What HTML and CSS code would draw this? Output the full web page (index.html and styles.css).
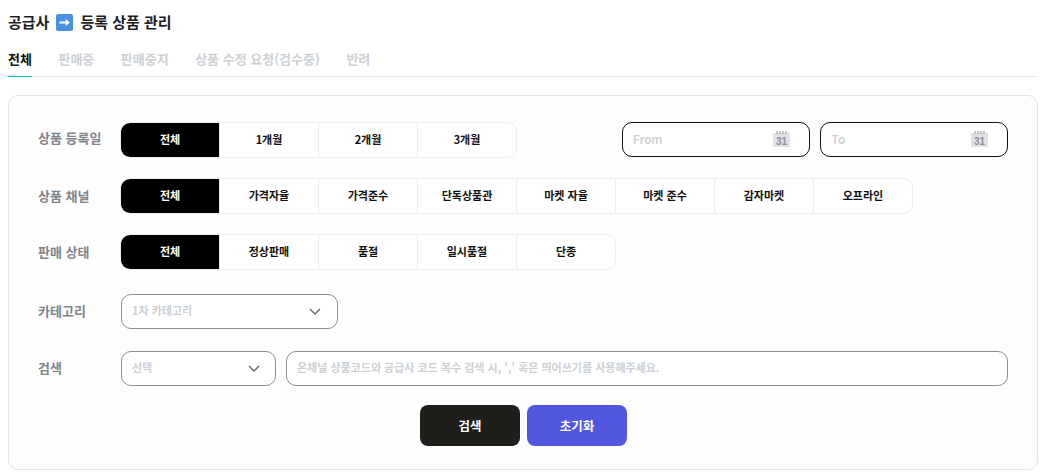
FILE: index.html
```html
<!DOCTYPE html>
<html lang="ko">
<head>
<meta charset="utf-8">
<title>등록 상품 관리</title>
<link rel="stylesheet" href="styles.css">
</head>
<body>
<h1 class="title"><span>공급사</span>
  <svg class="emoji" viewBox="0 0 17 17" width="17" height="17"><rect width="17" height="17" rx="2" fill="#4a90e2"/><path d="M3.500 7.400h6.300V5l4 3.500-4 3.500V9.600H3.500z" fill="#fff"/></svg>
  <span>등록 상품 관리</span></h1>
<nav class="tabs">
  <a class="tab active">전체</a>
  <a class="tab">판매중</a>
  <a class="tab">판매중지</a>
  <a class="tab">상품 수정 요청(검수중)</a>
  <a class="tab">반려</a>
</nav>
<section class="card">
  <div class="row row-first">
    <div class="label">상품 등록일</div>
    <div class="seg">
      <div class="cell on">전체</div><div class="cell">1개월</div><div class="cell">2개월</div><div class="cell">3개월</div>
    </div>
    <div class="dates">
      <div class="field date"><span class="ph ph-date">From</span>
        <svg class="cal" viewBox="0 0 17 16" width="17" height="16"><rect y="2" width="17" height="14" fill="#dfe1e4"/><path d="M4 0v3M7 0v3M10 0v3M13 0v3" stroke="#8d9095" stroke-width="1"/><text x="8.500" y="13.500" class="cal-num">31</text></svg>
      </div>
      <div class="field date"><span class="ph ph-date">To</span>
        <svg class="cal" viewBox="0 0 17 16" width="17" height="16"><rect y="2" width="17" height="14" fill="#dfe1e4"/><path d="M4 0v3M7 0v3M10 0v3M13 0v3" stroke="#8d9095" stroke-width="1"/><text x="8.500" y="13.500" class="cal-num">31</text></svg>
      </div>
    </div>
  </div>
  <div class="row">
    <div class="label">상품 채널</div>
    <div class="seg">
      <div class="cell on">전체</div><div class="cell">가격자율</div><div class="cell">가격준수</div><div class="cell">단독상품관</div><div class="cell">마켓 자율</div><div class="cell">마켓 준수</div><div class="cell">감자마켓</div><div class="cell">오프라인</div>
    </div>
  </div>
  <div class="row">
    <div class="label">판매 상태</div>
    <div class="seg">
      <div class="cell on">전체</div><div class="cell">정상판매</div><div class="cell">품절</div><div class="cell">일시품절</div><div class="cell">단종</div>
    </div>
  </div>
  <div class="row row-category">
    <div class="label">카테고리</div>
    <div class="field select wide"><span class="ph">1차 카테고리</span>
      <svg class="chev" viewBox="0 0 12 7" width="12" height="7"><path d="M1 1l5 5 5-5" fill="none" stroke="#5f6770" stroke-width="1.300"/></svg>
    </div>
  </div>
  <div class="row row-search">
    <div class="label">검색</div>
    <div class="field select narrow"><span class="ph">선택</span>
      <svg class="chev" viewBox="0 0 12 7" width="12" height="7"><path d="M1 1l5 5 5-5" fill="none" stroke="#5f6770" stroke-width="1.300"/></svg>
    </div>
    <div class="field select grow"><span class="ph">온채널 상품코드와 공급사 코드 복수 검색 시, ',' 혹은 띄어쓰기를 사용해주세요.</span></div>
  </div>
  <div class="actions">
    <button class="btn dark">검색</button>
    <button class="btn blue">초기화</button>
  </div>
</section>
</body>
</html>
```
FILE: styles.css
```css
* { box-sizing: border-box; }
html, body { height: 100%; }
body {
  margin: 0;
  padding: 0 7px 0 8px;
  background: #fff;
  color: #1d1d1f;
  font-family: "Noto Sans CJK KR", "Noto Sans", sans-serif;
  overflow: hidden;
}
.title {
  margin: 0;
  padding-top: 11px;
  height: 33px;
  font-size: 15px;
  line-height: 22px;
  font-weight: 700;
  display: flex;
  align-items: center;
  gap: 7px;
}
.emoji { flex: none; }
.tabs {
  margin-top: 11px;
  display: flex;
  gap: 26.500px;
  height: 33px;
  border-bottom: 1px solid #e8e8e8;
}
.tab {
  height: 33px;
  padding-top: 5px;
  font-size: 13px;
  line-height: 19px;
  font-weight: 700;
  color: #cdd0d4;
}
.tab.active {
  color: #111;
  border-bottom: 1px solid #00bfa8;
}
.card {
  margin-top: 18px;
  height: 375px;
  padding: 26px 29px 0 29px;
  background: #fdfdfd;
  border: 1px solid #e4e4e4;
  border-radius: 10px;
}
.row {
  display: flex;
  align-items: flex-start;
  height: 36px;
  margin-bottom: 20px;
}
.row-category { margin-top: 24px; margin-bottom: 21px; }
.row-search { margin-bottom: 18px; }
.label {
  width: 83px;
  flex: none;
  font-size: 13px;
  line-height: 36px;
  font-weight: 700;
  color: #80858b;
}
.row-first .label { line-height: 32px; }
.row-category .label, .row-search .label { line-height: 34px; }
.seg {
  flex: none;
  display: flex;
  height: 36px;
  margin-left: -1px;
  background: #fff;
  border: 1px solid #ececec;
  border-radius: 10px;
  overflow: hidden;
}
.cell {
  width: 99px;
  flex: none;
  text-align: center;
  font-size: 11px;
  line-height: 33px;
  font-weight: 700;
  color: #111;
  border-left: 1px solid #ececec;
}
.cell:first-child { width: 98px; border-left: 0; }
.cell.on { background: #000; color: #fff; }
.dates {
  margin-left: 105px;
  display: flex;
  gap: 10px;
}
.field {
  display: flex;
  align-items: center;
  justify-content: space-between;
  height: 35px;
  background: #fff;
  border: 1px solid #868e96;
  border-radius: 10px;
  padding: 0 10px;
}
.date {
  width: 188px;
  border-color: #111;
  padding-right: 19px;
}
.ph {
  font-size: 11px;
  line-height: 16px;
  margin-bottom: 3px;
  font-weight: 700;
  color: #cdd0d4;
}
.ph-date {
  font-family: "Inter", "Noto Sans", sans-serif;
  font-size: 12px;
  font-weight: 600;
  margin-bottom: 0;
}
.cal { flex: none; margin-top: -2px; }
.cal-num {
  font-family: "Liberation Sans", sans-serif;
  font-size: 10px;
  font-weight: 700;
  fill: #8d9095;
  text-anchor: middle;
}
.select { flex: none; }
.wide { width: 217px; padding-right: 16px; }
.narrow { width: 155px; padding-right: 15px; }
.grow { flex: 1; margin-left: 10px; }
.chev { flex: none; }
.actions {
  display: flex;
  justify-content: center;
  gap: 7px;
  padding-left: 1px;
}
.btn {
  width: 100px;
  height: 41px;
  border: 0;
  border-radius: 8px;
  color: #fff;
  font-family: inherit;
  font-size: 12.500px;
  font-weight: 700;
}
.dark { background: #201e1a; }
.blue { background: #5056dd; }
```
